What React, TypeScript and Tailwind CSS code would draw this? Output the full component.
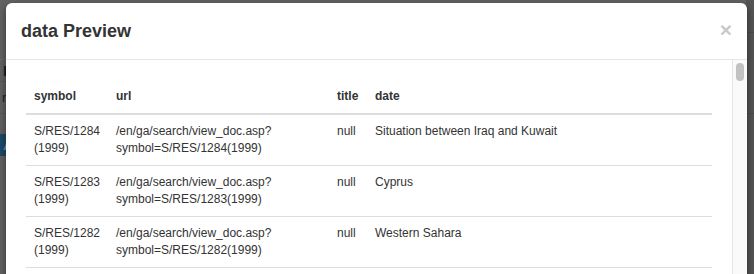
export default function App() {
  const rows = [
    { s: "S/RES/1284", n: "1284", d: "Situation between Iraq and Kuwait" },
    { s: "S/RES/1283", n: "1283", d: "Cyprus" },
    { s: "S/RES/1282", n: "1282", d: "Western Sahara" },
  ];
  return (
    <div
      className="relative h-[274px] w-[754px] overflow-hidden"
      style={{ fontFamily: '"Liberation Sans", Arial, sans-serif' }}
    >
      {/* dimmed page behind the modal */}
      <div className="flex h-full">
        <div className="flex flex-1 flex-col bg-[#636363]">
          <div className="h-[60px] border-b border-[#6c6c6c]" />
          <div className="h-[22px] border-b border-[#5a5a5a] pl-[3px] text-[15px] font-bold leading-[22px] text-[#1c1c1c]">
            Il
          </div>
          <div className="h-[32px] border-b border-[#5a5a5a] pl-[2px] pt-[8px] text-[13px] leading-[16px] text-[#1c1c3c]">
            r
          </div>
          <div className="mt-[20px] h-[22px] w-[40px] bg-[#1d4b6a] pl-[3px] text-[15px] font-bold leading-[22px] text-[#6f8fa8]">
            A
          </div>
        </div>
        <div className="flex w-[8px] flex-col bg-[#555555]">
          <div className="h-[33px] border-b border-[#4c4c4c]" />
          <div className="h-[81px] border-b border-[#4c4c4c]" />
        </div>
      </div>

      {/* modal */}
      <div className="absolute left-[6px] top-[3px] flex h-[300px] w-[741px] flex-col overflow-hidden rounded-[6px] bg-white shadow-[0_3px_9px_rgba(0,0,0,0.5)]">
        <div className="flex h-[57px] shrink-0 items-center justify-between border-b border-[#e5e5e5] px-[15px]">
          <h4 className="text-[18px] font-bold leading-[26px] text-[#333333]">data Preview</h4>
          <span className="-mt-[3px] text-[21px] font-bold leading-none text-[#c9c9c9]">×</span>
        </div>
        <div className="flex flex-1">
          <div className="flex-1 p-[20px]">
            <table className="w-[686px] table-fixed border-collapse text-[12px] leading-[17px] text-[#333333]">
              <colgroup>
                <col className="w-[82px]" />
                <col className="w-[221px]" />
                <col className="w-[38px]" />
                <col />
              </colgroup>
              <thead>
                <tr>
                  <th className="border-b-2 border-[#dddddd] p-[8px] text-left font-bold">symbol</th>
                  <th className="border-b-2 border-[#dddddd] p-[8px] text-left font-bold">url</th>
                  <th className="border-b-2 border-[#dddddd] p-[8px] text-left font-bold">title</th>
                  <th className="border-b-2 border-[#dddddd] p-[8px] text-left font-bold">date</th>
                </tr>
              </thead>
              <tbody>
                {rows.map((r, i) => (
                  <tr key={r.n}>
                    <td className={`border-b border-[#dddddd] p-[8px] align-top`}>
                      {r.s}
                      <br />
                      (1999)
                    </td>
                    <td className={`border-b border-[#dddddd] p-[8px] align-top`}>
                      /en/ga/search/view_doc.asp?
                      <br />
                      symbol=S/RES/{r.n}(1999)
                    </td>
                    <td className={`border-b border-[#dddddd] p-[8px] align-top`}>null</td>
                    <td className={`border-b border-[#dddddd] p-[8px] align-top`}>{r.d}</td>
                  </tr>
                ))}
              </tbody>
            </table>
          </div>
          <div className="w-[15px] shrink-0 border-l border-[#e6e6e6] bg-[#fafafa] pl-[3px] pt-[3px]">
            <div className="h-[18px] w-[8px] rounded-full bg-[#c2c2c2]" />
          </div>
        </div>
      </div>
    </div>
  );
}
